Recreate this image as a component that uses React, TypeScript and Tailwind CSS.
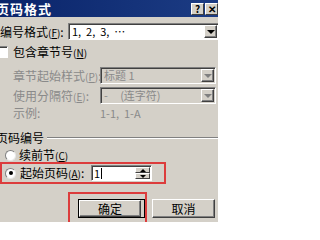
import React from "react"

const font = { fontFamily: '"Noto Sans CJK SC", "Liberation Sans", sans-serif' }

function Key({ k }: { k: string }) {
  return (
    <span className="text-[10px]">
      (<span className="underline">{k}</span>)
    </span>
  )
}

function Arrow({ disabled = false }: { disabled?: boolean }) {
  return (
    <div className="w-[13px] h-full flex items-center justify-center bg-[#d4d0c8] border border-t-white border-l-white border-b-[#404040] border-r-[#404040] shadow-[inset_-1px_-1px_0_#808080]">
      <div
        className={`w-0 h-0 border-l-[4px] border-r-[4px] border-t-[4px] border-l-transparent border-r-transparent ${
          disabled ? "border-t-[#808080]" : "border-t-black"
        }`}
      />
    </div>
  )
}

function Select({ text, disabled = false }: { text: string; disabled?: boolean }) {
  return (
    <div
      className={`flex-1 h-[17px] flex items-stretch border border-t-[#808080] border-l-[#808080] border-b-white border-r-white shadow-[inset_1px_1px_0_#404040] pl-[2px] pt-[1px] pr-[1px] pb-[1px] ${
        disabled ? "bg-[#d4d0c8]" : "bg-white"
      }`}
    >
      <div
        className={`flex-1 flex items-center text-[11px] leading-none pl-[1px] whitespace-pre ${
          disabled ? "text-[#8a8a8a]" : "text-black"
        }`}
      >
        {text}
      </div>
      <Arrow disabled={disabled} />
    </div>
  )
}

function Radio({ checked = false }: { checked?: boolean }) {
  return (
    <div className="w-[11px] h-[11px] rounded-full bg-white border border-t-[#808080] border-l-[#808080] border-b-[#e8e8e8] border-r-[#e8e8e8] flex items-center justify-center shrink-0">
      {checked && <div className="w-[4px] h-[4px] rounded-full bg-black" />}
    </div>
  )
}

function Button({ label, primary = false }: { label: string; primary?: boolean }) {
  return (
    <div className={primary ? "border border-black" : ""}>
      <div
        className={`${
          primary ? "w-[62px] h-[17px]" : "w-[63px] h-[19px]"
        } flex items-center justify-center bg-[#d4d0c8] border border-t-white border-l-white border-b-[#404040] border-r-[#404040] shadow-[inset_-1px_-1px_0_#808080] text-[12px] text-black leading-none`}
      >
        {label}
      </div>
    </div>
  )
}

export default function App() {
  return (
    <div
      className="w-[218px] h-[222px] bg-[#d4d0c8] overflow-hidden text-[12px] text-black leading-none"
      style={font}
    >
      {/* 标题栏 */}
      <div className="h-[17px] flex items-center justify-between bg-gradient-to-r from-[#0a246a] to-[#1c3c84]">
        <span className="-ml-[4px] text-white font-bold text-[13px] tracking-[1px]">页码格式</span>
        <div className="flex items-center gap-[1px] mt-[1px]">
          <div className="w-[13px] h-[12px] bg-[#d4d0c8] border border-t-white border-l-white border-b-[#404040] border-r-[#404040] flex items-center justify-center text-[10px] font-bold">
            ?
          </div>
          <div className="w-[13px] h-[12px] bg-[#d4d0c8] border border-t-white border-l-white border-b-[#404040] border-r-[#404040] flex items-center justify-center text-[10px] font-bold">
            ✕
          </div>
        </div>
      </div>

      {/* 编号格式 */}
      <div className="mt-[6px] flex items-center h-[17px]">
        <span className="w-[68px] shrink-0 whitespace-nowrap">
          编号格式<Key k="F" />:
        </span>
        <div className="flex-1 flex -mr-[1px]">
          <Select text="1,  2,  3,  …" />
        </div>
      </div>

      {/* 包含章节号 */}
      <div className="mt-[5px] h-[14px] flex items-center">
        <div className="-ml-[4px] w-[12px] h-[12px] bg-white border border-t-[#808080] border-l-[#808080] border-b-white border-r-white shadow-[inset_1px_1px_0_#404040] shrink-0" />
        <span className="ml-[5px]">
          包含章节号<Key k="N" />
        </span>
      </div>

      {/* 章节起始样式 */}
      <div className="mt-[8px] flex items-center h-[17px] pr-[2px] text-[#8a8a8a]">
        <span className="ml-[13px] w-[87px] shrink-0 whitespace-nowrap">
          章节起始样式<Key k="P" />:
        </span>
        <Select text="标题 1" disabled />
      </div>

      {/* 使用分隔符 */}
      <div className="mt-[3px] flex items-center h-[17px] pr-[2px] text-[#8a8a8a]">
        <span className="ml-[13px] w-[87px] shrink-0 whitespace-nowrap">
          使用分隔符<Key k="E" />:
        </span>
        <Select text="-     (连字符)" disabled />
      </div>

      {/* 示例 */}
      <div className="mt-[3px] flex items-center h-[12px] text-[#8a8a8a]">
        <span className="ml-[13px] w-[87px] shrink-0">示例:</span>
        <span className="text-[11px] whitespace-pre">1-1,  1-A</span>
      </div>

      {/* 页码编号 */}
      <div className="mt-[12px] flex items-center h-[14px]">
        <span className="-ml-[4px] shrink-0">页码编号</span>
        <div className="flex-1 ml-[3px] border-t border-t-[#808080] border-b border-b-white" />
      </div>

      {/* 续前节 */}
      <div className="mt-[3px] h-[14px] flex items-center">
        <div className="ml-[5px]">
          <Radio />
        </div>
        <span className="ml-[3px]">
          续前节<Key k="C" />
        </span>
      </div>

      {/* 起始页码 */}
      <div className="w-[166px] h-[22px] border-2 border-[#dc3c3c] flex items-center">
        <div className="ml-[3px]">
          <Radio checked />
        </div>
        <span className="ml-[4px] w-[71px] shrink-0 whitespace-nowrap">
          起始页码<Key k="A" />:
        </span>
        <div className="w-[61px] h-[16px] flex items-stretch bg-white border border-t-[#808080] border-l-[#808080] border-b-white border-r-white shadow-[inset_1px_1px_0_#404040] pl-[2px] pt-[1px] pr-[1px] pb-[1px]">
          <div className="flex-1 flex items-center text-[11px]">
            1<span className="w-[1px] h-[11px] bg-black ml-[1px]" />
          </div>
          <div className="w-[15px] flex flex-col">
            <div className="flex-1 flex items-center justify-center bg-[#d4d0c8] border border-t-white border-l-white border-b-[#404040] border-r-[#404040]">
              <div className="w-0 h-0 border-l-[3px] border-r-[3px] border-b-[3px] border-l-transparent border-r-transparent border-b-black" />
            </div>
            <div className="flex-1 flex items-center justify-center bg-[#d4d0c8] border border-t-white border-l-white border-b-[#404040] border-r-[#404040]">
              <div className="w-0 h-0 border-l-[3px] border-r-[3px] border-t-[3px] border-l-transparent border-r-transparent border-t-black" />
            </div>
          </div>
        </div>
      </div>

      {/* 按钮 */}
      <div className="mt-[8px] flex items-start">
        <div className="ml-[68px] w-[79px] h-[34px] border-2 border-[#dc3c3c] pl-[8px] pt-[5px]">
          <Button label="确定" primary />
        </div>
        <div className="ml-[5px] mt-[7px]">
          <Button label="取消" />
        </div>
      </div>
    </div>
  )
}
